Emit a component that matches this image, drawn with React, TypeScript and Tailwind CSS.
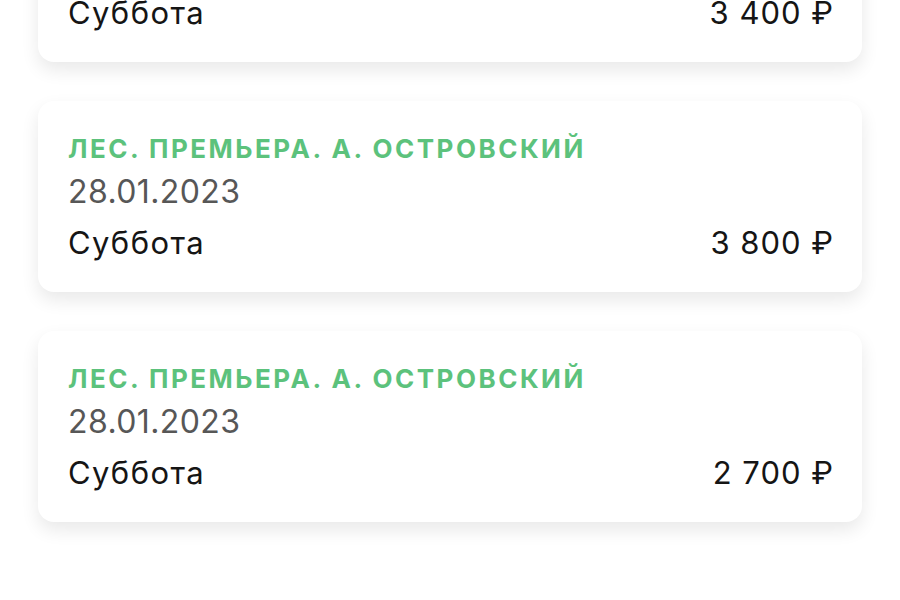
import React from "react";

const cards = [
  { price: "3 400 ₽" },
  { price: "3 800 ₽" },
  { price: "2 700 ₽" },
];

export default function App() {
  return (
    <div className="w-[900px] h-[600px] overflow-hidden bg-white" style={{ fontFamily: "Inter, 'Noto Sans', sans-serif" }}>
      <div className="flex flex-col gap-[39px] px-[38px] mt-[-129px]">
        {cards.map((c, i) => (
          <div
            key={i}
            className="h-[191px] rounded-[16px] bg-white pl-[30px] pr-[28px] pt-[31px] shadow-[0_8px_18px_rgba(0,0,0,0.09)]"
          >
            <div className="text-[26px] leading-[34px] font-bold tracking-[2.5px] text-[#5cc27c] whitespace-nowrap">
              ЛЕС. ПРЕМЬЕРА. А. ОСТРОВСКИЙ
            </div>
            <div className="text-[32px] leading-[52px] tracking-[0.4px] text-[#575757]">28.01.2023</div>
            <div className="flex justify-between items-center h-[50px] text-[31px] text-[#151515]">
              <span className="tracking-[1.4px]">Суббота</span>
              <span className="tracking-[1px]">{c.price}</span>
            </div>
          </div>
        ))}
      </div>
    </div>
  );
}
